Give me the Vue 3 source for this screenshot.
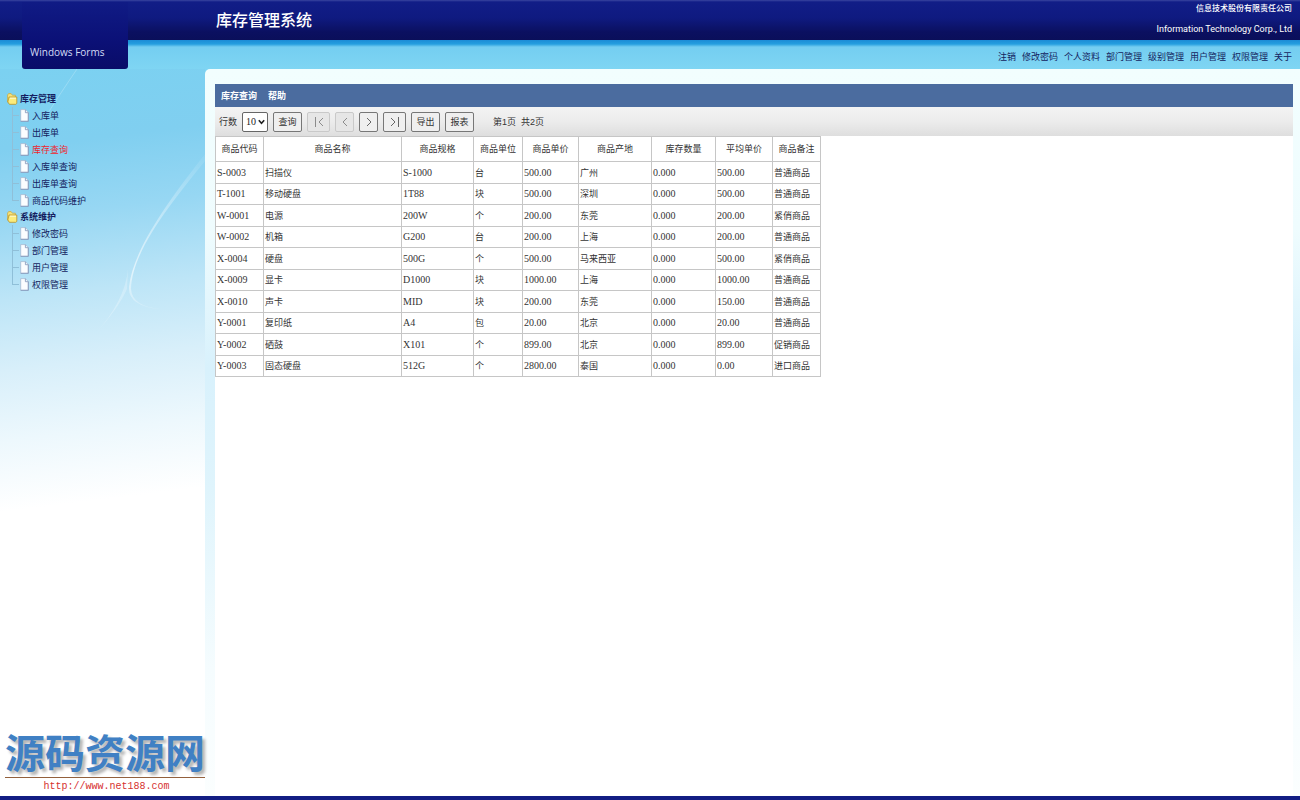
<script setup>
import { ref } from 'vue'

const rowCount = ref('10')

const topLinks = ['注销', '修改密码', '个人资料', '部门管理', '级别管理', '用户管理', '权限管理', '关于']

const groups = [
  { name: '库存管理', items: ['入库单', '出库单', '库存查询', '入库单查询', '出库单查询', '商品代码维护'] },
  { name: '系统维护', items: ['修改密码', '部门管理', '用户管理', '权限管理'] },
]
const active = '库存查询'

const pagers = [
  { label: '首页', d: 'M1.5 1v10M9 2L5 6l4 4', wide: true, disabled: true },
  { label: '上一页', d: 'M7 2L3 6l4 4', wide: false, disabled: true },
  { label: '下一页', d: 'M3 2l4 4-4 4', wide: false, disabled: false },
  { label: '末页', d: 'M1 2l4 4-4 4M8.5 1v10', wide: true, disabled: false },
]

const columns = ['商品代码', '商品名称', '商品规格', '商品单位', '商品单价', '商品产地', '库存数量', '平均单价', '商品备注']
const asciiColumns = [0, 2, 4, 6, 7]
const rows = [
  ['S-0003', '扫描仪', 'S-1000', '台', '500.00', '广州', '0.000', '500.00', '普通商品'],
  ['T-1001', '移动硬盘', '1T88', '块', '500.00', '深圳', '0.000', '500.00', '普通商品'],
  ['W-0001', '电源', '200W', '个', '200.00', '东莞', '0.000', '200.00', '紧俏商品'],
  ['W-0002', '机箱', 'G200', '台', '200.00', '上海', '0.000', '200.00', '普通商品'],
  ['X-0004', '硬盘', '500G', '个', '500.00', '马来西亚', '0.000', '500.00', '紧俏商品'],
  ['X-0009', '显卡', 'D1000', '块', '1000.00', '上海', '0.000', '1000.00', '普通商品'],
  ['X-0010', '声卡', 'MID', '块', '200.00', '东莞', '0.000', '150.00', '普通商品'],
  ['Y-0001', '复印纸', 'A4', '包', '20.00', '北京', '0.000', '20.00', '普通商品'],
  ['Y-0002', '硒鼓', 'X101', '个', '899.00', '北京', '0.000', '899.00', '促销商品'],
  ['Y-0003', '固态硬盘', '512G', '个', '2800.00', '泰国', '0.000', '0.00', '进口商品'],
]
</script>

<template>
  <div class="page">
    <header class="banner">
      <div class="logo"><span>Windows Forms</span></div>
      <h1>库存管理系统</h1>
      <div class="company">
        <span>信息技术股份有限责任公司</span>
        <span class="en">Information Technology Corp., Ltd</span>
      </div>
    </header>

    <nav class="top-nav">
      <a v-for="l in topLinks" :key="l" href="#">{{ l }}</a>
    </nav>

    <div class="body">
      <aside class="side">
        <svg class="swoosh" viewBox="0 0 205 400" preserveAspectRatio="none" aria-hidden="true">
          <defs>
            <linearGradient id="glow" x1="0" y1="0" x2="0" y2="1">
              <stop offset="0" stop-color="#fff" stop-opacity="0.05" />
              <stop offset="0.75" stop-color="#fff" stop-opacity="0.6" />
              <stop offset="1" stop-color="#fff" stop-opacity="0.2" />
            </linearGradient>
          </defs>
          <path d="M205 85C170 130 133 180 129 218Q128 237 160 240Q132 237 131 220C132 182 171 134 205 92Z" fill="url(#glow)" />
          <path d="M77 0Q60 25 48 44" fill="none" stroke="#fff" stroke-opacity="0.22" />
          <path d="M128 200Q125 232 95 265Q118 240 127 220Z" fill="#fff" fill-opacity="0.25" />
        </svg>
        <ul class="tree">
          <li v-for="g in groups" :key="g.name">
            <div class="folder">
              <svg width="11" height="12" viewBox="0 0 11 12" aria-hidden="true">
                <path d="M.6 2L1.6.6h2.5L5.4 2.2h3V9H.6z" fill="#f5e27a" stroke="#c9a63a" stroke-width=".7" />
                <path d="M2 4h7.8v6.4l-1 .9H2.4L.8 9z" fill="#fbec7c" stroke="#b99226" stroke-width=".8" />
                <path d="M3 5.2h6" stroke="#fffde0" stroke-width=".9" />
              </svg>
              <strong>{{ g.name }}</strong>
            </div>
            <ul class="leaves">
              <li v-for="i in g.items" :key="i">
                <a href="#" :class="{ active: i === active }">
                  <svg width="9" height="13" viewBox="0 0 9 13" aria-hidden="true">
                    <path d="M.7.6h4.8l2.8 3v8.7H.7z" fill="#fbfdff" stroke="#9fb3cd" stroke-width=".7" />
                    <path d="M5.4.7v3h2.9M8.3 3.7v8.6H.7" fill="none" stroke="#7d93b8" stroke-width=".8" />
                  </svg>
                  <span>{{ i }}</span>
                </a>
              </li>
            </ul>
          </li>
        </ul>
        <div class="mark">
          <strong>源码资源网</strong>
          <a href="#">http://www.net188.com</a>
        </div>
      </aside>

      <main class="panel">
        <div class="sheet">
          <nav class="menu">
            <a href="#">库存查询</a>
            <a href="#">帮助</a>
          </nav>
          <form class="tools" @submit.prevent>
            <label for="rows">行数</label>
            <span class="picker">
              <select id="rows" v-model="rowCount">
                <option>10</option>
                <option>20</option>
              </select>
              <svg width="7" height="6" viewBox="0 0 7 6" aria-hidden="true">
                <path d="M.8 1.2l2.7 3 2.7-3" fill="none" stroke="#222" stroke-width="1.6" />
              </svg>
            </span>
            <button type="submit" class="text">查询</button>
            <button
              v-for="p in pagers"
              :key="p.label"
              type="button"
              :class="{ wide: p.wide }"
              :disabled="p.disabled"
              :aria-label="p.label"
            >
              <svg width="10" height="12" viewBox="0 0 10 12" aria-hidden="true">
                <path :d="p.d" fill="none" stroke="currentColor" />
              </svg>
            </button>
            <button type="button" class="text">导出</button>
            <button type="button" class="text">报表</button>
            <span class="pages">第1页&nbsp; 共2页</span>
          </form>
          <table>
            <colgroup>
              <col v-for="(c, n) in columns" :key="c" :class="'c' + n" />
            </colgroup>
            <thead>
              <tr>
                <th v-for="c in columns" :key="c" scope="col">{{ c }}</th>
              </tr>
            </thead>
            <tbody>
              <tr v-for="r in rows" :key="r[0]">
                <td v-for="(v, n) in r" :key="n" :class="{ ascii: asciiColumns.includes(n) }">{{ v }}</td>
              </tr>
            </tbody>
          </table>
        </div>
      </main>
    </div>
    <footer class="base"></footer>
  </div>
</template>

<style>
body {
  margin: 0;
}
</style>

<style scoped>
.page {
  min-height: 100vh;
  display: flex;
  flex-direction: column;
  font: 9px/16px "Liberation Sans", "Noto Sans CJK SC", sans-serif;
  color: #333;
  background: #fff;
}
a {
  color: inherit;
  text-decoration: none;
}
ul {
  list-style: none;
  margin: 0;
  padding: 0;
}
.banner {
  position: relative;
  height: 40px;
  display: flex;
  align-items: center;
  justify-content: space-between;
  padding: 0 8px 0 216px;
  box-sizing: border-box;
  color: #fff;
  background: linear-gradient(#3a45a0 0, #111d87 2px, #0f1a80 18px, #0b1060 32px, #0a0f5a);
}
.logo {
  position: absolute;
  z-index: 2;
  left: 22px;
  top: 2px;
  width: 106px;
  height: 67px;
  box-sizing: border-box;
  padding: 42px 0 0 8px;
  border-radius: 0 0 3px 3px;
  background: linear-gradient(#101b85, #0b1076 60%, #090c68);
  color: #d5dcf6;
  font: 10px/16px "Open Sans", sans-serif;
}
h1 {
  margin: 0;
  padding-bottom: 2px;
  font: 500 16px/24px "Noto Sans CJK SC", sans-serif;
}
.company {
  display: flex;
  flex-direction: column;
  align-items: flex-end;
  gap: 5px;
  padding-bottom: 3px;
  font: 500 8px/16px "Noto Sans CJK SC", sans-serif;
}
.company .en {
  font: 9px/16px Roboto, sans-serif;
}
.top-nav {
  height: 29px;
  box-sizing: border-box;
  display: flex;
  justify-content: flex-end;
  gap: 6px;
  padding: 9px 8px 0 0;
  color: #14245f;
  background: linear-gradient(#1b8cd6 0, #249edf 4px, #74cef1 7px, #7fd5f3);
}
.body {
  flex: 1;
  display: flex;
  background: linear-gradient(#7fd5f3 0 40px, transparent 40px);
}
.side {
  position: relative;
  width: 205px;
  flex: none;
  display: flex;
  flex-direction: column;
  background: linear-gradient(173deg, #7bd1f1 0, #80cff0 80px, #97d7f3 150px, #bde5f7 230px, #d8effa 300px, #edf8fd 370px, #fff 440px);
}
.swoosh {
  position: absolute;
  left: 0;
  top: 0;
  width: 100%;
  height: 400px;
}
.tree {
  position: relative;
  padding: 22px 0 0 7px;
  color: #141d60;
}
.folder {
  height: 16px;
  display: flex;
  align-items: center;
  gap: 2px;
}
.folder svg {
  flex: none;
}
.leaves {
  padding-left: 5px;
}
.leaves li {
  height: 17px;
  padding-left: 8px;
  background:
    linear-gradient(#8fbfd8, #8fbfd8) 0 8px / 7px 1px no-repeat,
    linear-gradient(#8fbfd8, #8fbfd8) 0 0 / 1px 100% no-repeat;
}
.leaves li:last-child {
  background-size: 7px 1px, 1px 9px;
}
.leaves a {
  display: flex;
  align-items: center;
  gap: 3px;
  height: 17px;
}
.leaves .active {
  color: #f01f2d;
}
.mark {
  position: relative;
  margin-top: auto;
  padding-left: 5px;
  display: flex;
  flex-direction: column;
}
.mark strong {
  padding-bottom: 6px;
  font: 700 40px/40px "Noto Sans CJK SC", sans-serif;
  color: #4080c4;
  text-shadow: 3px 3px 3px #b5b5b5;
  border-bottom: 1px solid #93603c;
  white-space: nowrap;
}
.mark a {
  padding-left: 3px;
  text-align: center;
  font: 10px/18px "Liberation Mono", monospace;
  color: #d62f2f;
}
.panel {
  flex: 1;
  min-width: 0;
  display: flex;
  padding: 15px 7px 0 10px;
  border-top-left-radius: 5px;
  background: linear-gradient(#f2fefe 0, #effcfe 160px, #d8f1fc 300px, #dff4fc 420px, #f5fcfe 600px, #fbfefe);
}
.sheet {
  flex: 1;
  min-width: 0;
  background: #fff;
}
.menu {
  height: 23px;
  display: flex;
  align-items: center;
  gap: 11px;
  padding-left: 6px;
  box-sizing: border-box;
  background: #4b6c9f;
  color: #fff;
  font-weight: 700;
}
.tools {
  height: 29px;
  display: flex;
  align-items: center;
  gap: 5px;
  padding-left: 4px;
  background: linear-gradient(#f3f3f3, #ececec 50%, #dedede);
}
.picker {
  position: relative;
  display: flex;
}
select {
  appearance: none;
  width: 26px;
  height: 20px;
  margin: 0;
  padding: 0 0 0 3px;
  border: 1px solid #666;
  border-radius: 2px;
  background: #fff;
  color: #222;
  font: 10px/16px "Liberation Serif", serif;
}
.picker svg {
  position: absolute;
  right: 3px;
  top: 7px;
  pointer-events: none;
}
button {
  width: 19px;
  height: 20px;
  box-sizing: border-box;
  display: flex;
  align-items: center;
  justify-content: center;
  padding: 0;
  border: 1px solid #777;
  border-radius: 2px;
  background: #efefef;
  color: #333;
  font: inherit;
}
button svg {
  color: #666;
}
button.wide {
  width: 23px;
}
button.text {
  width: 29px;
}
button:disabled {
  border-color: #c9c9c9;
  background: #e6e6e6;
}
button:disabled svg {
  color: #8c8c8c;
}
.pages {
  margin-left: 14px;
}
table {
  table-layout: fixed;
  width: 606px;
  border-collapse: collapse;
}
th,
td {
  height: 22px;
  box-sizing: border-box;
  padding: 0 1px;
  border: 1px solid #c6c6c6;
  font-weight: 400;
  line-height: 16px;
  text-align: left;
  white-space: nowrap;
}
th {
  height: 25px;
  text-align: center;
}
td.ascii {
  font-family: "Liberation Serif", serif;
  font-size: 10px;
}
tbody tr:nth-child(even) td {
  height: 21px;
}
.c0,
.c8 {
  width: 48px;
}
.c1 {
  width: 138px;
}
.c2 {
  width: 72px;
}
.c3 {
  width: 49px;
}
.c4 {
  width: 56px;
}
.c5 {
  width: 73px;
}
.c6 {
  width: 64px;
}
.c7 {
  width: 57px;
}
.base {
  height: 4px;
  background: #121d83;
}
</style>
